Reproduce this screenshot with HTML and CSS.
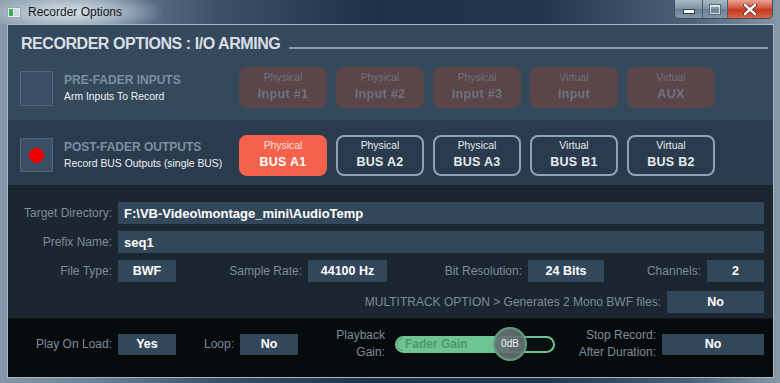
FILE: index.html
```html
<!DOCTYPE html>
<html>
<head>
<meta charset="utf-8">
<link rel="stylesheet" href="styles.css">
</head>
<body>
<div class="window">
  <div class="titlebar">
    <svg class="appicon" width="14" height="11" viewBox="0 0 14 11">
      <rect x="0.5" y="0.5" width="13" height="10" fill="#e8ecef" stroke="#9aa5ad"/>
      <rect x="2" y="2" width="4" height="7" fill="#3fae5a"/>
      <rect x="7" y="2" width="5" height="7" fill="#d3d9de"/>
    </svg>
    <span class="wtitle">Recorder Options</span>
    <div class="wctrls">
      <div class="wbtn min"><span class="g-min"></span></div>
      <div class="wbtn max"><span class="g-max"></span></div>
      <div class="wbtn close">
        <svg width="14" height="11" viewBox="0 0 14 11"><path d="M2 1 L12 10 M12 1 L2 10" stroke="#5a1a12" stroke-width="4" stroke-linecap="round"/><path d="M2 1 L12 10 M12 1 L2 10" stroke="#ffffff" stroke-width="2.4" stroke-linecap="round"/></svg>
      </div>
    </div>
  </div>
  <div class="client">
    <section class="arming">
      <div class="heading">
        <h1>RECORDER OPTIONS : I/O ARMING</h1>
        <div class="rule"></div>
      </div>
      <div class="arm-row pre">
        <div class="check"></div>
        <div class="arm-text">
          <div class="arm-title">PRE-FADER INPUTS</div>
          <div class="arm-sub">Arm Inputs To Record</div>
        </div>
        <div class="chips">
          <div class="chip off"><span class="c1">Physical</span><span class="c2">Input #1</span></div>
          <div class="chip off"><span class="c1">Physical</span><span class="c2">Input #2</span></div>
          <div class="chip off"><span class="c1">Physical</span><span class="c2">Input #3</span></div>
          <div class="chip off"><span class="c1">Virtual</span><span class="c2">Input</span></div>
          <div class="chip off"><span class="c1">Virtual</span><span class="c2">AUX</span></div>
        </div>
      </div>
    </section>
    <section class="arm-row post">
      <div class="check"><span class="dot"></span></div>
      <div class="arm-text">
        <div class="arm-title">POST-FADER OUTPUTS</div>
        <div class="arm-sub">Record BUS Outputs (single BUS)</div>
      </div>
      <div class="chips">
        <div class="chip active"><span class="c1">Physical</span><span class="c2">BUS A1</span></div>
        <div class="chip on"><span class="c1">Physical</span><span class="c2">BUS A2</span></div>
        <div class="chip on"><span class="c1">Physical</span><span class="c2">BUS A3</span></div>
        <div class="chip on"><span class="c1">Virtual</span><span class="c2">BUS B1</span></div>
        <div class="chip on"><span class="c1">Virtual</span><span class="c2">BUS B2</span></div>
      </div>
    </section>
    <section class="settings">
      <div class="srow">
        <span class="lbl w104">Target Directory:</span>
        <span class="box grow left">F:\VB-Video\montage_mini\AudioTemp</span>
      </div>
      <div class="srow">
        <span class="lbl w104">Prefix Name:</span>
        <span class="box grow left">seq1</span>
      </div>
      <div class="srow">
        <span class="lbl w104">File Type:</span>
        <span class="box w58">BWF</span>
        <span class="lbl w120">Sample Rate:</span>
        <span class="box w79">44100 Hz</span>
        <span class="lbl w129">Bit Resolution:</span>
        <span class="box w76">24 Bits</span>
        <span class="lbl w91">Channels:</span>
        <span class="box grow">2</span>
      </div>
      <div class="srow multi">
        <span class="lbl grow">MULTITRACK OPTION &gt; Generates 2 Mono BWF files:</span>
        <span class="box w97">No</span>
      </div>
    </section>
    <section class="playbar">
      <span class="lbl w104">Play On Load:</span>
      <span class="box w58">Yes</span>
      <span class="lbl w52">Loop:</span>
      <span class="box w58">No</span>
      <span class="lbl w81 two">Playback<br>Gain:</span>
      <div class="fader">
        <div class="track">
          <div class="fill"><span class="flabel">Fader Gain</span></div>
        </div>
        <div class="knob">0dB</div>
      </div>
      <span class="lbl w95 two">Stop Record:<br>After Duration:</span>
      <span class="box grow">No</span>
    </section>
  </div>
</div>
</body>
</html>
```

FILE: styles.css
```css
html, body {
  margin: 0;
  padding: 0;
}
body {
  width: 780px;
  height: 383px;
  overflow: hidden;
  font-family: "Liberation Sans", Arial, sans-serif;
}
.window {
  width: 780px;
  height: 383px;
  box-sizing: border-box;
  padding: 0 6px 5px 7px;
  display: flex;
  flex-direction: column;
  background: linear-gradient(90deg, #8597a8 0%, #6d8398 12%, #3a5169 28%, #1d3149 48%, #22374e 70%, #4a6176 88%, #8798a8 100%);
}
.titlebar {
  height: 24px;
  display: flex;
  align-items: flex-start;
  background: radial-gradient(ellipse 95px 22px at 70px 12px, rgba(225,233,240,0.92) 0%, rgba(200,212,222,0.6) 55%, rgba(200,212,222,0) 100%);
  margin: 0 -6px 0 -7px;
  padding: 0 6px 0 7px;
}
.appicon {
  margin-top: 7px;
  flex: none;
}
.wtitle {
  margin-left: 7px;
  font-size: 12px;
  line-height: 24px;
  color: #141a20;
}
.wctrls {
  margin-left: auto;
  margin-right: 1px;
  display: flex;
  height: 18px;
  border: 1px solid #3d4f60;
  border-top: none;
  border-radius: 0 0 5px 5px;
  overflow: hidden;
}
.wbtn {
  height: 18px;
  display: flex;
  align-items: center;
  justify-content: center;
  box-sizing: border-box;
}
.wbtn.min {
  width: 28px;
  background: linear-gradient(180deg, #aab8c4 0%, #7e92a3 50%, #6a8093 51%, #8496a6 100%);
  border-right: 1px solid #4c5e6e;
}
.wbtn.max {
  width: 25px;
  background: linear-gradient(180deg, #aab8c4 0%, #7e92a3 50%, #6a8093 51%, #8496a6 100%);
  border-right: 1px solid #4c5e6e;
}
.wbtn.close {
  width: 44px;
  background: linear-gradient(180deg, #e8a393 0%, #d4543c 45%, #c23a20 55%, #d8644a 100%);
}
.g-min {
  display: block;
  width: 10px;
  height: 3px;
  margin-top: 5px;
  background: #fff;
  border: 1px solid #2e3d4a;
}
.g-max {
  display: block;
  width: 8px;
  height: 6px;
  border: 1px solid #f4f6f8;
  border-top-width: 2px;
  box-shadow: 0 0 0 1px #4a5b6a;
  opacity: 0.75;
}
.client {
  flex: 1;
  border: 1px solid #a9b7c3;
  display: flex;
  flex-direction: column;
  background: #1b2631;
  overflow: hidden;
}
.arming {
  background: #34495c;
  height: 95px;
  flex: none;
}
.heading {
  height: 35px;
  display: flex;
  align-items: flex-start;
  padding-left: 13px;
  box-sizing: border-box;
}
.heading h1 {
  margin: 9px 0 0 0;
  font-size: 16px;
  line-height: 20px;
  font-weight: bold;
  letter-spacing: -0.45px;
  color: #d9dfe4;
  white-space: nowrap;
}
.rule {
  flex: 1;
  height: 2px;
  margin: 22px 5px 0 9px;
  background: #8f9ca7;
}
.arm-row {
  display: flex;
  align-items: flex-start;
  padding-left: 12px;
  box-sizing: border-box;
}
.arm-row.pre {
  height: 60px;
  padding-top: 7px;
}
.arm-row.post {
  height: 65px;
  padding-top: 15px;
  background: #2a3b4d;
  flex: none;
}
.check {
  width: 33px;
  height: 34px;
  box-sizing: border-box;
  border: 1px solid #4f667b;
  background: #3a4f66;
  display: flex;
  align-items: center;
  justify-content: center;
  flex: none;
}
.pre .check {
  margin-top: 4px;
  height: 35px;
}
.post .check {
  margin-top: 3px;
}
.dot {
  width: 15px;
  height: 15px;
  border-radius: 50%;
  background: #f00000;
}
.arm-text {
  width: 186px;
  box-sizing: border-box;
  padding-left: 11px;
  flex: none;
}
.pre .arm-text {
  margin-top: 6px;
}
.post .arm-text {
  margin-top: 5px;
}
.arm-title {
  font-size: 12px;
  line-height: 15px;
  font-weight: bold;
  color: #7a90a4;
  white-space: nowrap;
}
.arm-sub {
  margin-top: 2px;
  font-size: 10.4px;
  line-height: 14px;
  color: #eef1f3;
  white-space: nowrap;
}
.chips {
  display: flex;
  gap: 9px;
}
.chip {
  width: 88px;
  height: 41px;
  box-sizing: border-box;
  border-radius: 8px;
  display: flex;
  flex-direction: column;
  align-items: center;
  padding-top: 4px;
}
.chip .c1 {
  font-size: 10.4px;
  line-height: 13px;
}
.chip .c2 {
  margin-top: 3px;
  font-size: 12.5px;
  line-height: 15px;
  font-weight: bold;
  letter-spacing: 0.3px;
}
.chip.off {
  background: #5a4548;
  color: #6f7380;
}
.chip.on {
  border: 2px solid #8ba4b6;
  color: #e6eaed;
  padding-top: 2px;
}
.chip.active {
  background: #f5624b;
  color: #ffffff;
}
.chip.active .c1 {
  color: #ffe0da;
}
.settings {
  height: 133px;
  flex: none;
  box-sizing: border-box;
  padding: 17px 9px 0 0;
  display: flex;
  flex-direction: column;
  gap: 7px;
}
.srow {
  display: flex;
  gap: 6px;
  height: 22px;
  align-items: stretch;
}
.srow.multi {
  margin-top: 2px;
}
.lbl {
  font-size: 12px;
  color: #7d8c98;
  text-align: right;
  white-space: nowrap;
  display: flex;
  align-items: center;
  justify-content: flex-end;
  flex: none;
}
.box {
  background: #33475a;
  color: #ffffff;
  font-weight: bold;
  font-size: 12.5px;
  display: flex;
  align-items: center;
  justify-content: center;
  white-space: nowrap;
  flex: none;
}
.box.left {
  justify-content: flex-start;
  padding-left: 6px;
  font-size: 13px;
}
.grow { flex: 1; }
.lbl.grow { flex: 1; }
.box.grow { flex: 1; }
.w52 { width: 52px; }
.w58 { width: 58px; }
.w76 { width: 76px; }
.w79 { width: 79px; }
.w81 { width: 81px; }
.w91 { width: 91px; }
.w95 { width: 95px; }
.w97 { width: 97px; }
.w104 { width: 104px; }
.w120 { width: 120px; }
.w129 { width: 129px; }
.playbar {
  flex: 1;
  background: #080b0e;
  border-top: 1px solid #0f151b;
  display: flex;
  align-items: center;
  gap: 6px;
  padding: 0 9px 8px 0;
}
.playbar .box {
  height: 21px;
}
.lbl.two {
  display: block;
  line-height: 17px;
  font-size: 12px;
}
.fader {
  position: relative;
  width: 160px;
  height: 17px;
  margin-left: 4px;
  flex: none;
}
.track {
  width: 100%;
  height: 100%;
  box-sizing: border-box;
  border: 2px solid #6fc493;
  border-radius: 9px;
  overflow: hidden;
  background: #0a0f12;
}
.fill {
  width: 112px;
  height: 100%;
  background: #6fc493;
  display: flex;
  align-items: center;
  padding-left: 8px;
  box-sizing: border-box;
}
.flabel {
  font-size: 12px;
  font-weight: bold;
  color: #4c9a6a;
  white-space: nowrap;
}
.knob {
  position: absolute;
  left: 98px;
  top: -9px;
  width: 34px;
  height: 34px;
  box-sizing: border-box;
  border-radius: 50%;
  border: 2px solid #5f9f7b;
  background: rgba(100, 112, 114, 0.92);
  color: #f2f4f5;
  font-size: 10px;
  display: flex;
  align-items: center;
  justify-content: center;
}
```
